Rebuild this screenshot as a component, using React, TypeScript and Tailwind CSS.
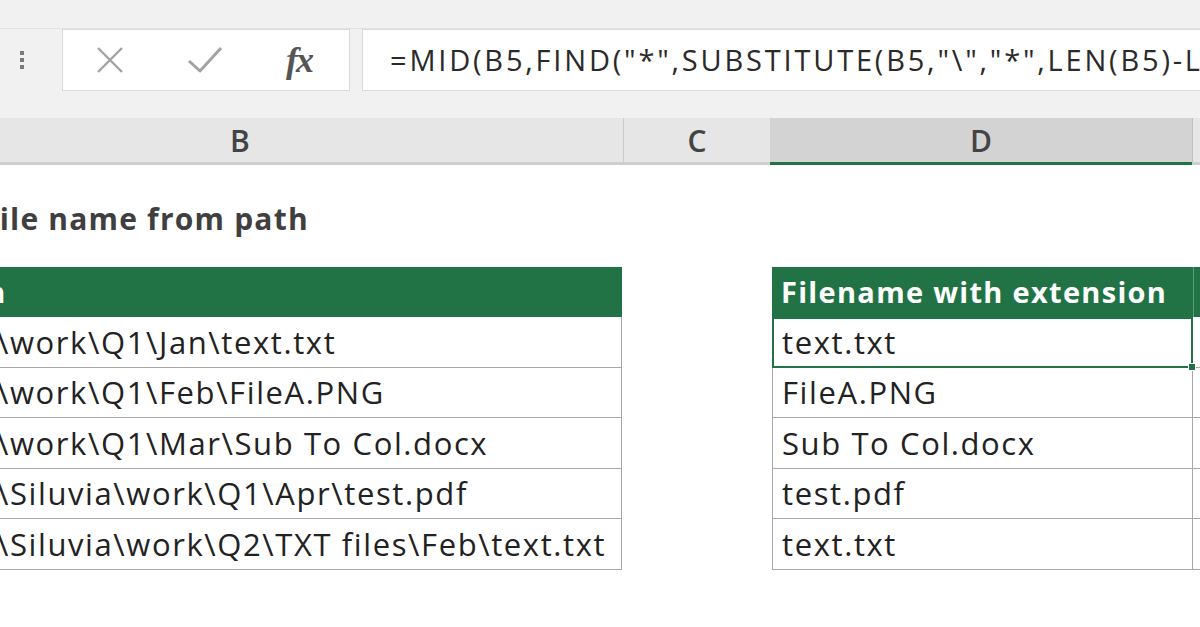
import React from 'react';

const rows = [
  { path: '\\work\\Q1\\Jan\\text.txt', name: 'text.txt' },
  { path: '\\work\\Q1\\Feb\\FileA.PNG', name: 'FileA.PNG' },
  { path: '\\work\\Q1\\Mar\\Sub To Col.docx', name: 'Sub To Col.docx' },
  { path: '\\Siluvia\\work\\Q1\\Apr\\test.pdf', name: 'test.pdf' },
  { path: '\\Siluvia\\work\\Q2\\TXT files\\Feb\\text.txt', name: 'text.txt' },
];

const heights = ['h-[51px]', 'h-[50px]', 'h-[51px]', 'h-[50px]', 'h-[51px]'];

const FormulaBar = () => (
  <div className="bg-[#f1f1f1]">
    <div className="h-[29px] border-b border-[#e2e2e2]" />
    <div className="flex h-[62px] items-stretch">
      {/* 左侧拖动点 */}
      <div className="w-[62px] flex items-center justify-center pr-[18px]">
        <div className="flex flex-col gap-[3px]">
          <span className="w-[4px] h-[4px] bg-[#7a7a7a]" />
          <span className="w-[4px] h-[4px] bg-[#7a7a7a]" />
          <span className="w-[4px] h-[4px] bg-[#7a7a7a]" />
        </div>
      </div>
      {/* 取消 / 确认 / 插入函数 */}
      <div className="w-[288px] bg-white border border-[#dadada] flex items-center">
        <div className="w-[92px] flex justify-center">
          <svg width="34" height="34" viewBox="0 0 34 34" className="ml-[2px]">
            <path d="M5 5 L29 29 M29 5 L5 29" stroke="#a3a3a3" strokeWidth="2.4" fill="none" />
          </svg>
        </div>
        <div className="w-[100px] flex justify-center">
          <svg width="38" height="34" viewBox="0 0 38 34">
            <path d="M3 18 L14 28 L35 5" stroke="#a3a3a3" strokeWidth="3" fill="none" strokeLinejoin="round" />
          </svg>
        </div>
        <div className="flex-1 flex justify-center pr-[6px]">
          <span className="font-['Liberation_Serif',serif] italic font-semibold text-[36px] leading-none text-[#555] tracking-[-2px]">
            fx
          </span>
        </div>
      </div>
      <div className="w-[12px]" />
      <div className="flex-1 bg-white border-y border-l border-[#dadada] flex items-center pl-[27px] overflow-hidden whitespace-nowrap">
        <span className="text-[29px] text-[#2a2a2a] tracking-[2.8px]">
          =MID(B5,FIND("*",SUBSTITUTE(B5,"\","*",LEN(B5)-LEN(SUBSTITUTE(B5,"\",""))))+1,LEN(B5))
        </span>
      </div>
    </div>
    <div className="h-[27px]" />
  </div>
);

const ColumnHeaders = () => (
  <div className="flex h-[47px] bg-[#e6e6e6] border-b-[3px] border-[#cfcfcf] text-[#444] text-[30px] font-semibold">
    <div className="w-[624px] border-r border-[#cbcbcb] flex items-center pl-[230px]">B</div>
    <div className="w-[146px] flex items-center justify-center">C</div>
    <div className="w-[422px] bg-[#d3d3d3] border-b-[3px] border-[#217346] -mb-[3px] flex items-center justify-center">
      D
    </div>
    <div className="flex-1 border-l border-[#bdbdbd]" />
  </div>
);

export default function App() {
  return (
    <div className="w-[1200px] h-[627px] overflow-hidden bg-white font-['Open_Sans',sans-serif]">
      <FormulaBar />
      <ColumnHeaders />

      <div className="h-[28px]" />
      <div className="h-[50px] flex items-center overflow-hidden">
        <span className="-ml-[18px] text-[30px] font-bold text-[#3f3f3f] whitespace-nowrap tracking-[1.2px]">
          File name from path
        </span>
      </div>
      <div className="h-[24px]" />

      {/* 表头 */}
      <div className="flex h-[50px]">
        <div className="w-[622px] bg-[#217346] flex items-center overflow-hidden">
          <span className="-ml-[66px] text-[29px] font-bold text-white whitespace-nowrap tracking-[1.3px]">Path</span>
        </div>
        <div className="w-[150px]" />
        <div className="w-[421px] bg-[#217346] flex items-center pl-[9px] overflow-hidden">
          <span className="text-[29px] font-bold text-white whitespace-nowrap tracking-[1.3px]">
            Filename with extension
          </span>
        </div>
        <div className="flex-1 bg-[#217346] border-l border-[#5d9a78]" />
      </div>

      {rows.map((r, i) => (
        <div key={i} className={`flex ${heights[i]}`}>
          <div className="w-[622px] border-r border-b border-[#a8a8a8] flex items-center overflow-hidden">
            <span className="-ml-[3px] text-[31px] text-[#222] whitespace-nowrap tracking-[1.6px]">{r.path}</span>
          </div>
          <div className="w-[150px]" />
          <div
            className={
              i === 0
                ? 'relative w-[421px] border-2 border-[#217346] flex items-center pl-[8px]'
                : 'w-[421px] border-l border-r border-b border-[#a8a8a8] flex items-center pl-[9px]'
            }
          >
            <span className="text-[31px] text-[#222] whitespace-nowrap tracking-[1.6px]">{r.name}</span>
            {i === 0 && (
              <span className="absolute -right-[5px] -bottom-[5px] w-[8px] h-[8px] bg-[#217346] border border-white" />
            )}
          </div>
          <div className="flex-1 border-b border-[#a8a8a8]" />
        </div>
      ))}
    </div>
  );
}
